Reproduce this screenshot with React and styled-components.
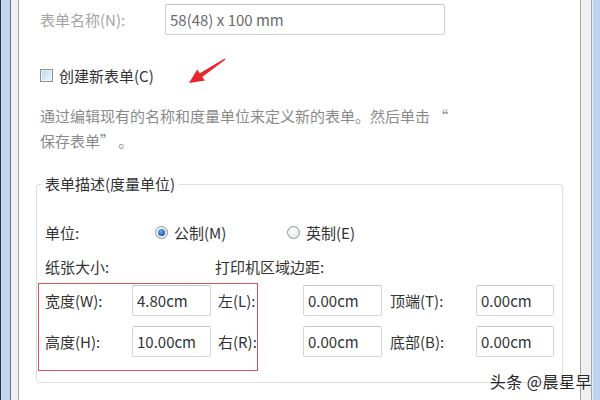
import React from 'react';
import styled, { createGlobalStyle } from 'styled-components';

const GlobalStyle = createGlobalStyle`
	html, body {
		margin: 0;
		padding: 0;
		background: #ffffff;
	}
	body {
		width: 600px;
		height: 400px;
		overflow: hidden;
		font-family: 'Noto Sans CJK SC', 'Liberation Sans', sans-serif;
	}
`;

const Window = styled.div`
	display: flex;
	width: 600px;
	height: 400px;
	background: #ffffff;
`;

const FrameLeft = styled.div`
	width: 19px;
	flex-shrink: 0;
	background: linear-gradient(
		to right,
		#2d3541 0 1px,
		#bfd6ee 1px 10px,
		#677587 10px 11px,
		#f0f0f0 11px 18px,
		#a9a9a9 18px 19px
	);
`;

const FrameRight = styled.div`
	width: 21px;
	flex-shrink: 0;
	background: linear-gradient(
		to right,
		#a3a3a3 0 1px,
		#f0f0f0 1px 11px,
		#9fa6ae 11px 12px,
		#e8f0f8 12px 13px,
		#bcd4ee 13px 21px
	);
`;

const Content = styled.div`
	position: relative;
	flex: 1;
	display: flex;
	flex-direction: column;
	padding: 0 17px;
	color: #333333;
	font-size: 15px;
`;

const Row = styled.div`
	display: flex;
	align-items: center;
	padding-left: 4px;
	margin-top: ${(p) => p.$top || 0}px;
	height: ${(p) => p.$height || 22}px;
`;

const NameLabel = styled.span`
	width: 125px;
	color: #a4a4a4;
`;

const TextBox = styled.div`
	box-sizing: border-box;
	width: ${(p) => p.$width}px;
	height: 31px;
	display: flex;
	align-items: center;
	padding-left: 4px;
	border: 1px solid ${(p) => (p.$disabled ? '#cfcfcf' : '#d6d6d6')};
	border-top-color: ${(p) => (p.$disabled ? '#c4c4c4' : '#c6c6c6')};
	border-radius: 2px;
	background: #ffffff;
	color: ${(p) => (p.$disabled ? '#6a6a6a' : '#333333')};
	font-size: 15px;
	white-space: nowrap;
`;

const CheckBox = styled.span`
	box-sizing: border-box;
	width: 13px;
	height: 13px;
	margin-right: 6px;
	border: 1px solid #8c8f93;
	background: linear-gradient(135deg, #bcd5ef 0%, #dae8f6 55%, #f2f7fc 100%);
	box-shadow: inset 0 0 0 1px #eef4fa;
`;

const Description = styled.p`
	margin: 18px 0 0;
	padding-left: 4px;
	line-height: 25px;
	color: #8a8a8a;
	font-size: 15px;
`;

const Group = styled.fieldset`
	margin: 21px 0 0;
	padding: 27px 7px 25px 8px;
	border: 1px solid #dedede;
	border-radius: 3px;
	min-width: 0;
`;

const GroupTitle = styled.legend`
	margin-left: -3px;
	padding: 0 3px;
	line-height: 20px;
	color: #333333;
	font-size: 15px;
`;

const FieldRow = styled.div`
	display: flex;
	align-items: center;
	height: 22px;
	margin-top: ${(p) => p.$top || 0}px;
`;

const FieldLabel = styled.span`
	width: ${(p) => p.$width}px;
	flex-shrink: 0;
`;

const Radio = styled.span`
	box-sizing: border-box;
	width: 13px;
	height: 13px;
	margin-right: 6px;
	border-radius: 50%;
	border: 1px solid #8d9196;
	background: radial-gradient(circle at 40% 35%, #ffffff 0%, #e4e8ec 80%);
	display: flex;
	align-items: center;
	justify-content: center;
	&::after {
		content: '';
		display: ${(p) => (p.$checked ? 'block' : 'none')};
		width: 7px;
		height: 7px;
		border-radius: 50%;
		background: radial-gradient(circle at 40% 35%, #6fb2e8 0%, #1a5da6 70%, #123f78 100%);
	}
`;

const Option = styled.span`
	display: flex;
	align-items: center;
	width: ${(p) => p.$width}px;
`;

const SizeGrid = styled.div`
	display: grid;
	grid-template-columns: 87px 79px 92px 79px 94px 79px;
	grid-auto-rows: 31px;
	row-gap: 10px;
	margin-top: 8px;
	align-items: center;
`;

const GridLabel = styled.span`
	padding-left: ${(p) => p.$indent || 0}px;
	white-space: nowrap;
`;

const Annotation = styled.div`
	position: absolute;
	left: 19px;
	top: 283px;
	width: 220px;
	height: 88px;
	box-sizing: border-box;
	border: 1px solid #d9545a;
	pointer-events: none;
`;

const Arrow = styled.svg`
	position: absolute;
	left: 146px;
	top: 52px;
	width: 70px;
	height: 40px;
`;

const Watermark = styled.div`
	position: absolute;
	right: -12px;
	top: 369px;
	font-size: 16px;
	color: #262626;
	letter-spacing: 0.5px;
	text-shadow: 0 0 2px #ffffff, 0 0 2px #ffffff;
	white-space: nowrap;
`;

const margins = [
	['宽度(W):', '4.80cm', '左(L):', '0.00cm', '顶端(T):', '0.00cm'],
	['高度(H):', '10.00cm', '右(R):', '0.00cm', '底部(B):', '0.00cm'],
];

export default function App() {
	return (
		<>
			<GlobalStyle />
			<Window>
				<FrameLeft />
				<Content>
					<Row $top={4} $height={31}>
						<NameLabel>表单名称(N):</NameLabel>
						<TextBox $width={280} $disabled>
							58(48) x 100 mm
						</TextBox>
					</Row>
					<Row $top={30} $height={20}>
						<CheckBox />
						<span>创建新表单(C)</span>
					</Row>
					<Description>
						通过编辑现有的名称和度量单位来定义新的表单。然后单击 “
						<br />
						保存表单” 。
					</Description>
					<Group>
						<GroupTitle>表单描述(度量单位)</GroupTitle>
						<FieldRow>
							<FieldLabel $width={110}>单位:</FieldLabel>
							<Option $width={132}>
								<Radio $checked />
								公制(M)
							</Option>
							<Option>
								<Radio />
								英制(E)
							</Option>
						</FieldRow>
						<FieldRow $top={12}>
							<FieldLabel $width={170}>纸张大小:</FieldLabel>
							<span>打印机区域边距:</span>
						</FieldRow>
						<SizeGrid>
							{margins.map((row) =>
								row.map((cell, i) =>
									i % 2 === 0 ? (
										<GridLabel key={cell} $indent={i === 0 ? 0 : i === 2 ? 7 : 8}>
											{cell}
										</GridLabel>
									) : (
										<TextBox key={row[0] + i} $width={i === 5 ? 78 : 79}>
											{cell}
										</TextBox>
									)
								)
							)}
						</SizeGrid>
					</Group>
					<Annotation />
					<Arrow viewBox="146 52 70 40">
						<polygon
							points="170,83 178.2,69.4 180.8,73.2 205.7,58.4 206.5,59.6 183.2,77 186,80.6"
							fill="#e8262b"
						/>
					</Arrow>
					<Watermark>头条 @晨星早</Watermark>
				</Content>
				<FrameRight />
			</Window>
		</>
	);
}
